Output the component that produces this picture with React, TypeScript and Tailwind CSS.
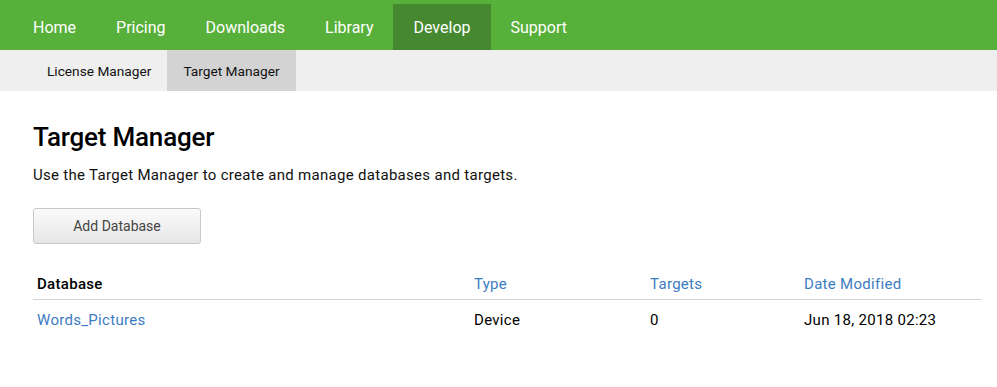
import React from 'react';

const navItems = ['Home', 'Pricing', 'Downloads', 'Library', 'Develop', 'Support'];
const subItems = ['License Manager', 'Target Manager'];

export default function App() {
  return (
    <div className="min-h-screen bg-white text-black" style={{ fontFamily: 'Roboto, "Liberation Sans", sans-serif' }}>
      {/* Main nav */}
      <nav className="h-[50px] bg-[#57b03a] flex items-end pl-[13px]">
        {navItems.map(item => (
          <a
            key={item}
            className={`h-[46px] flex items-center px-5 text-[16px] text-white ${item === 'Develop' ? 'bg-[#458830]' : ''}`}
          >
            <span className="mt-[2px]">{item}</span>
          </a>
        ))}
      </nav>

      {/* Sub nav */}
      <div className="h-[41px] bg-[#efefef] flex pl-[31px]">
        {subItems.map(item => (
          <a
            key={item}
            className={`flex items-center px-4 text-[13.7px] text-[#111] ${item === 'Target Manager' ? 'bg-[#d3d3d3]' : ''}`}
          >
            <span className="mt-[1px]">{item}</span>
          </a>
        ))}
      </div>

      <main className="px-[33px] pr-[15px]">
        <h1 className="mt-[29px] text-[26px] font-medium leading-[34px] tracking-[-0.2px]">Target Manager</h1>
        <p className="mt-[10px] text-[15px] leading-[22px] tracking-[0.3px] text-[#111]">
          Use the Target Manager to create and manage databases and targets.
        </p>
        <button className="mt-[22px] w-[168px] h-[36px] rounded-[3px] border border-[#c8c8c8] bg-gradient-to-b from-[#fbfbfb] to-[#e6e6e6] text-[14px] text-[#444]">
          Add Database
        </button>

        <table className="mt-[25px] w-full text-[15px] tracking-[0.3px] border-collapse">
          <thead>
            <tr className="border-b border-[#d4d4d4]">
              <th className="text-left font-medium pl-1 h-[30px] w-[441px] text-black">Database</th>
              <th className="text-left font-normal w-[176px] text-[#3d7cc1]">Type</th>
              <th className="text-left font-normal w-[154px] text-[#3d7cc1]">Targets</th>
              <th className="text-left font-normal text-[#3d7cc1]">Date Modified</th>
            </tr>
          </thead>
          <tbody>
            <tr>
              <td className="pl-1 h-[42px] text-[#3d7cc1]">Words_Pictures</td>
              <td>Device</td>
              <td>0</td>
              <td>Jun 18, 2018 02:23</td>
            </tr>
          </tbody>
        </table>
      </main>
    </div>
  );
}
